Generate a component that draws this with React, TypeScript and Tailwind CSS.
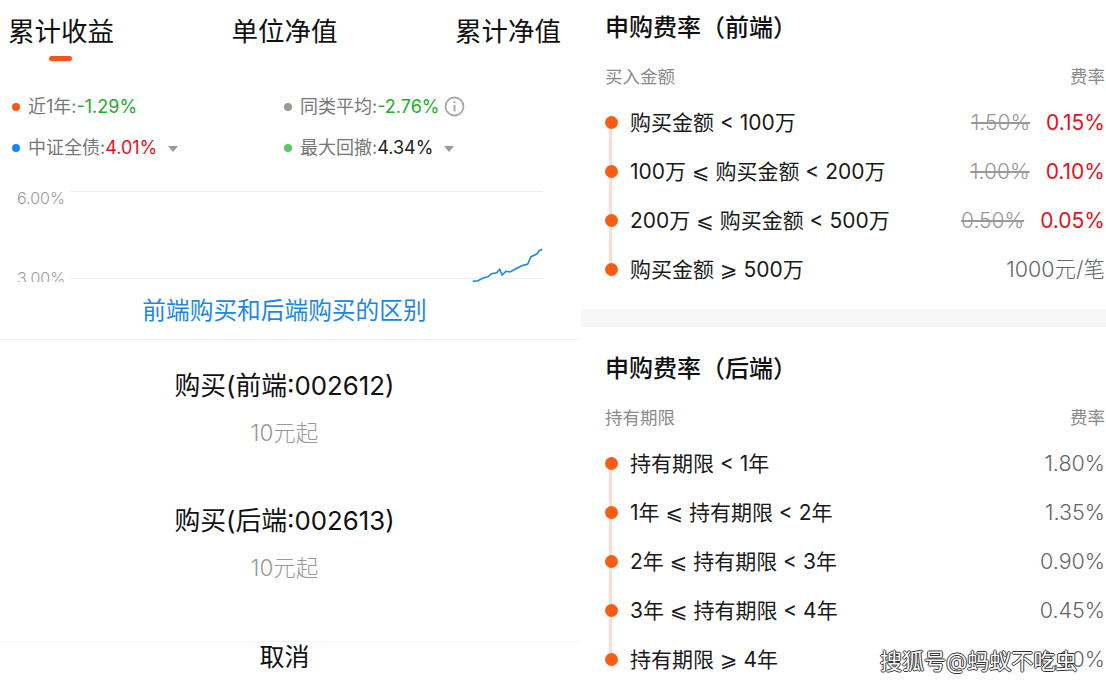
const tabs = ["累计收益", "单位净值", "累计净值"];

const frontRows = [
  { label: "购买金额 < 100万", old: "1.50%", rate: "0.15%" },
  { label: "100万 ⩽ 购买金额 < 200万", old: "1.00%", rate: "0.10%" },
  { label: "200万 ⩽ 购买金额 < 500万", old: "0.50%", rate: "0.05%" },
  { label: "购买金额 ⩾ 500万", plain: "1000元/笔" },
];

const backRows = [
  { label: "持有期限 < 1年", plain: "1.80%" },
  { label: "1年 ⩽ 持有期限 < 2年", plain: "1.35%" },
  { label: "2年 ⩽ 持有期限 < 3年", plain: "0.90%" },
  { label: "3年 ⩽ 持有期限 < 4年", plain: "0.45%" },
  { label: "持有期限 ⩾ 4年", plain: "0.00%" },
];

type Row = { label: string; old?: string; rate?: string; plain?: string };

function Caret() {
  return <span className="ml-[11px] mt-[2px] h-0 w-0 border-x-[5px] border-t-[6px] border-x-transparent border-t-[#999999]" />;
}

function LegendItem({ dot, label, value, valueColor, children }: { dot: string; label: string; value: string; valueColor: string; children?: React.ReactNode }) {
  return (
    <div className="flex items-center">
      <span className={`mr-[8px] h-[8px] w-[8px] rounded-full ${dot}`} />
      <span className="text-[18px] leading-none text-[#777777]">{label}:</span>
      <span className={`text-[18px] leading-none ${valueColor}`}>{value}</span>
      {children}
    </div>
  );
}

function FeeSection({ title, sub, rows }: { title: string; sub: string; rows: Row[] }) {
  return (
    <section className="pl-[24px] pr-[1px]">
      <h2 className="flex h-[56px] items-center text-[24px] font-medium leading-none text-[#111111]">{title}</h2>
      <div className="flex h-[40px] items-center justify-between pt-[2px] text-[17.5px] leading-none text-[#8a8a8a]">
        <span>{sub}</span>
        <span>费率</span>
      </div>
      <ul className="relative mt-[2px]">
        <span className="absolute bottom-[24px] left-[4px] top-[24px] w-[3px] bg-[#fddccf]" />
        {rows.map((row) => (
          <li key={row.label} className="relative flex h-[49px] items-center justify-between">
            <div className="flex items-center">
              <span className="h-[13px] w-[13px] rounded-full bg-[#fb5c14]" />
              <span className="ml-[12px] text-[21px] leading-none text-[#1a1a1a]">{row.label}</span>
            </div>
            {row.plain ? (
              <span className="text-[21.5px] font-light leading-none text-[#666666]">{row.plain}</span>
            ) : (
              <div className="flex items-center gap-[16px] text-[21px] leading-none">
                <span className="font-light text-[#999999] line-through">{row.old}</span>
                <span className="text-[#e60f1e]">{row.rate}</span>
              </div>
            )}
          </li>
        ))}
      </ul>
    </section>
  );
}

function BuyOption({ title }: { title: string }) {
  return (
    <button className="flex h-[135px] w-full flex-col items-center pt-[30px]">
      <span className="flex h-[32px] items-center text-[25.8px] leading-none text-[#111111]">{title}</span>
      <span className="mt-[15px] flex h-[32px] items-center text-[22.5px] font-light leading-none text-[#999999]">10元起</span>
    </button>
  );
}

export default function App() {
  return (
    <div className="relative flex h-[687px] w-[1106px] overflow-hidden bg-white font-['Inter','Noto_Sans_CJK_SC','DejaVu_Sans',sans-serif]">
      {/* left panel */}
      <div className="w-[581px] shrink-0">
        <div className="flex h-[62px] items-center justify-between pl-[8px] pr-[20px]">
          {tabs.map((t, i) => (
            <div key={t} className="relative text-[26.5px] leading-none text-[#111111]">
              {t}
              {i === 0 && <span className="absolute left-[41px] top-[38px] h-[5px] w-[23px] rounded-full bg-[#f9531a]" />}
            </div>
          ))}
        </div>
        <div className="grid h-[106px] grid-cols-[272px_1fr] grid-rows-[41px_41px] items-center pl-[12px] pt-[24px]">
          <LegendItem dot="bg-[#f9531a]" label="近1年" value="-1.29%" valueColor="text-[#22ad2b]" />
          <LegendItem dot="bg-[#999999]" label="同类平均" value="-2.76%" valueColor="text-[#22ad2b]">
            <svg className="ml-[4px]" width="21" height="21" viewBox="0 0 21 21" fill="none" stroke="#a8a8a8">
              <circle cx="10.5" cy="10.5" r="9" strokeWidth="1.8" />
              <path d="M10.5 9v6.5" strokeWidth="2" />
              <path d="M10.5 5.2v2" strokeWidth="2" />
            </svg>
          </LegendItem>
          <LegendItem dot="bg-[#1486f5]" label="中证全债" value="4.01%" valueColor="text-[#e60f1e]">
            <Caret />
          </LegendItem>
          <LegendItem dot="bg-[#5ac85a]" label="最大回撤" value="4.34%" valueColor="text-[#222222]">
            <Caret />
          </LegendItem>
        </div>
        <div className="flex h-[114px] overflow-hidden">
          <div className="w-[70px] shrink-0 pl-[17px] pt-[22px] text-[16px] font-light leading-none text-[#999999]">
            <div>6.00%</div>
            <div className="mt-[64px]">3.00%</div>
          </div>
          <svg width="480" height="114" viewBox="0 0 480 114" fill="none">
            <path d="M0 23.500H473M0 110.500H473" stroke="#eeeeee" />
            <path
              d="M402.700 113.300L408 112.700L413 110L418 108.700L421.700 105.700L426.700 104.700L429.700 101.300L432 107L436 103.300L440 104L445 101.300L451.700 97.700L457.700 96L461 88.700L466.700 86L469.300 82.700L472.300 81.300"
              stroke="#1d87e4"
              strokeWidth="1.600"
            />
          </svg>
        </div>
        <div className="flex h-[58px] items-center justify-center border-b border-[#f2f2f2] pr-[12px] text-[23.7px] leading-none text-[#1d87e4]">
          前端购买和后端购买的区别
        </div>
        <div className="h-[302px] border-b border-[#f4f4f4] pr-[12px]">
          <BuyOption title="购买(前端:002612)" />
          <BuyOption title="购买(后端:002613)" />
        </div>
        <div className="flex h-[30px] items-center justify-center pr-[12px] text-[25px] leading-none text-[#111111]">取消</div>
      </div>

      {/* right panel */}
      <div className="min-w-0 flex-1">
        <FeeSection title="申购费率（前端）" sub="买入金额" rows={frontRows} />
        <div className="mt-[15px] h-[18px] bg-[#f6f6f6]" />
        <div className="pt-[14px]">
          <FeeSection title="申购费率（后端）" sub="持有期限" rows={backRows} />
        </div>
      </div>

      {/* watermark */}
      <span className="absolute left-[880px] top-[650px] text-[22px] leading-none text-white [text-shadow:1px_0_0_#333,-1px_0_0_#333,0_1px_0_#333,0_-1px_0_#333]">
        搜狐号@蚂蚁不吃虫
      </span>
    </div>
  );
}
